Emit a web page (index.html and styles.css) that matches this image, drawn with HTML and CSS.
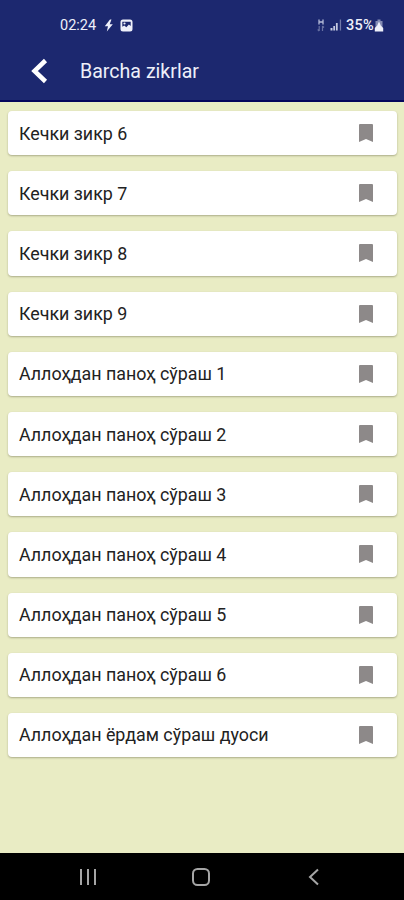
FILE: index.html
```html
<!DOCTYPE html>
<html lang="uz">
	<head>
		<meta charset="UTF-8">
		<meta name="viewport" content="width=device-width, initial-scale=1.0">

		<title>Barcha zikrlar</title>

		<link rel="stylesheet" href="styles.css">
	</head>
	<body>
		<!-- bookmark shape used by every row -->
		<svg class="defs" width="0" height="0">
			<symbol id="mark" viewBox="0 0 14 18">
				<path d="M1 0h12a1 1 0 0 1 1 1V18l-7-3-7 3V1A1 1 0 0 1 1 0z"/>
			</symbol>
		</svg>

		<header>
			<div class="status">
				<span class="time">02:24</span>
				<svg class="bolt" width="10" height="13" viewBox="0 0 10 13"><path d="M6 0.5L0.800 7.200h3.200L2.800 12.500l6-7.300H5.700L7.500 0.500z"/></svg>
				<svg class="photo" width="13" height="13" viewBox="0 0 13 13">
					<path fill-rule="evenodd" d="M3 0.5h7A2.5 2.5 0 0 1 12.5 3v7a2.5 2.5 0 0 1-2.5 2.5H3A2.5 2.5 0 0 1 0.5 10V3A2.5 2.5 0 0 1 3 0.5zM2.3 2.8v5l2-1.3 2 1.7 2.6-2.7 1.8 1.6V2.8z"/>
					<circle cx="4.5" cy="4.5" r="1.1"/>
				</svg>
				<div class="right">
					<svg class="net" width="8" height="13" viewBox="0 0 8 13">
						<path d="M2 0.5v5M6 0.5v5M2 3h4" stroke-width="1.3"/>
						<path class="dim" d="M2.2 7v5M0.7 10.5l1.5 1.5M5.5 12V7M7 8.5L5.5 7" stroke-width="1.2"/>
					</svg>
					<svg class="signal" width="12" height="12" viewBox="0 0 12 12">
						<path d="M0.5 9h2v2.5h-2zM3.3 7H5v4.5H3.3zM5.9 4h1.8v7.5H5.9z"/>
						<path class="dim" d="M9.8 0.5h1.300v11H9.800z"/>
					</svg>
					<span class="percent">35%</span>
					<svg class="battery" width="10" height="13" viewBox="0 0 10 13">
						<path class="dim" d="M3.5 0.5h3V2h2v8h-7V2h2z"/>
						<path d="M5 2.5L3 7h4zM0.8 9l2-2h4.400l2 2v3.500H0.800z"/>
					</svg>
				</div>
			</div>
			<div class="bar">
				<svg class="back" width="18" height="26" viewBox="0 0 18 26"><path d="M15.5 2.500L4.500 13l11 10.500"/></svg>
				<h1>Barcha zikrlar</h1>
			</div>
		</header>

		<main>
			<div class="card"><span>Кечки зикр 6</span><svg><use href="#mark"/></svg></div>
			<div class="card"><span>Кечки зикр 7</span><svg><use href="#mark"/></svg></div>
			<div class="card"><span>Кечки зикр 8</span><svg><use href="#mark"/></svg></div>
			<div class="card"><span>Кечки зикр 9</span><svg><use href="#mark"/></svg></div>
			<div class="card"><span>Аллоҳдан паноҳ сўраш 1</span><svg><use href="#mark"/></svg></div>
			<div class="card"><span>Аллоҳдан паноҳ сўраш 2</span><svg><use href="#mark"/></svg></div>
			<div class="card"><span>Аллоҳдан паноҳ сўраш 3</span><svg><use href="#mark"/></svg></div>
			<div class="card"><span>Аллоҳдан паноҳ сўраш 4</span><svg><use href="#mark"/></svg></div>
			<div class="card"><span>Аллоҳдан паноҳ сўраш 5</span><svg><use href="#mark"/></svg></div>
			<div class="card"><span>Аллоҳдан паноҳ сўраш 6</span><svg><use href="#mark"/></svg></div>
			<div class="card"><span>Аллоҳдан ёрдам сўраш дуоси</span><svg><use href="#mark"/></svg></div>
		</main>

		<footer>
			<svg width="18" height="18" viewBox="0 0 18 18"><path d="M2 1v16M9 1v16M16 1v16"/></svg>
			<svg width="18" height="18" viewBox="0 0 18 18"><rect x="1" y="1" width="16" height="16" rx="4.5"/></svg>
			<svg width="18" height="18" viewBox="0 0 18 18"><path d="M13 1.500L5 9l8 7.500"/></svg>
		</footer>
	</body>
</html>
```
FILE: styles.css
```css
*{
	box-sizing: border-box;
}
body{
	margin: 0;
	height: 900px;
	display: flex;
	flex-direction: column;
	overflow: hidden;
	background-color: #e9ecc4;
	font-family: Roboto, "Noto Sans", sans-serif;
}
.defs{
	position: absolute;
}
header{
	height: 102px;
	flex: none;
	background-color: #1c286f;
	border-bottom: 2px solid #05065c;
	color: #eef0fa;
}
.status{
	height: 50px;
	padding: 0 20px 0 60px;
	display: flex;
	align-items: center;
	font-size: 14.5px;
	fill: #eef0fa;
}
.time{
	width: 38px;
}
.bolt{
	margin-left: 6px;
}
.photo{
	margin-left: 6px;
}
.right{
	margin-left: auto;
	display: flex;
	align-items: center;
}
.percent{
	font-weight: 500;
	letter-spacing: 0.3px;
}
.net{
	fill: none;
	stroke: #b4bad8;
	margin-right: 5px;
}
.signal{
	fill: #c6cbe2;
	margin-right: 4px;
}
.dim{
	opacity: 0.5;
}
.bar{
	height: 42px;
	padding-left: 30px;
	display: flex;
	align-items: center;
}
.back{
	fill: none;
	stroke: #fff;
	stroke-width: 4.5;
}
h1{
	margin: 0 0 0 32px;
	font-size: 19.6px;
	font-weight: 400;
}
main{
	flex: 1;
	padding: 9px 7px 0 8px;
	display: flex;
	flex-direction: column;
	gap: 16px;
}
.card{
	height: 44.2px;
	flex: none;
	padding: 0 24px 0 11px;
	display: flex;
	align-items: center;
	justify-content: space-between;
	background-color: #fff;
	border-radius: 4px;
	box-shadow: 0 1px 2px rgba(80, 80, 50, 0.4);
	font-size: 17.85px;
	color: #222;
}
.card svg{
	width: 14px;
	height: 18px;
	fill: #8d8989;
}
footer{
	height: 47px;
	flex: none;
	padding: 0 81px 0 79px;
	display: flex;
	align-items: center;
	justify-content: space-between;
	background-color: #000;
}
footer svg{
	fill: none;
	stroke: #a5a5a5;
	stroke-width: 2;
}
```
